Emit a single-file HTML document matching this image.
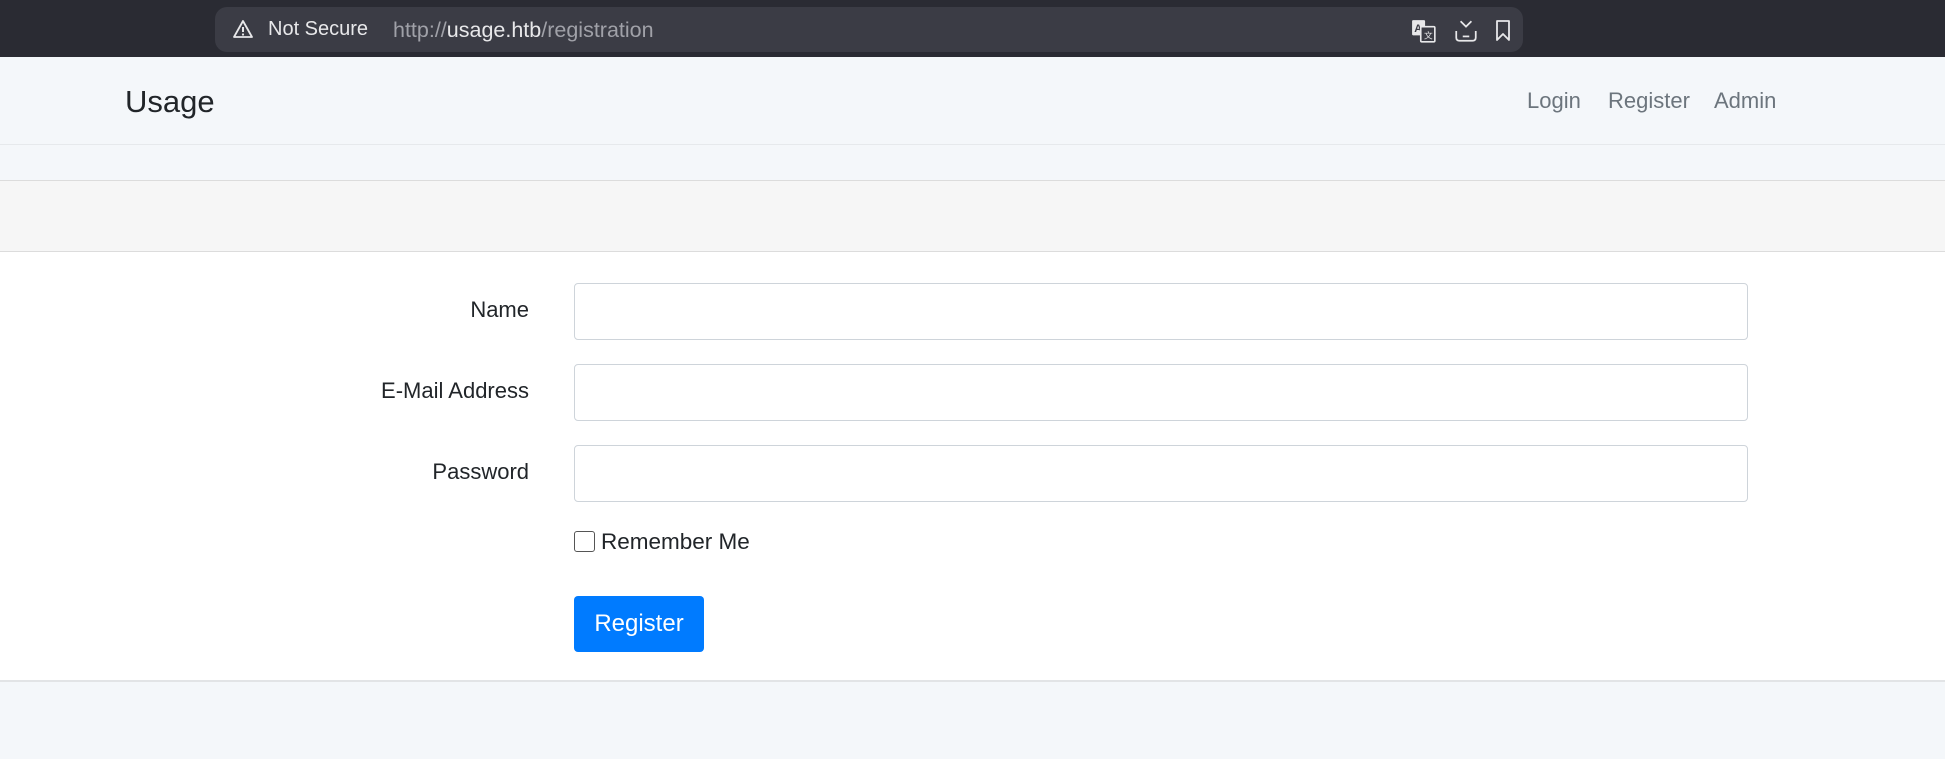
<!DOCTYPE html>
<html><head><meta charset="utf-8"><style>
*{box-sizing:border-box;margin:0;padding:0}
body{width:1945px;height:759px;overflow:hidden;background:#f4f7fa;font-family:"Liberation Sans",sans-serif;position:relative}
.top{position:absolute;left:0;top:0;width:1945px;height:57px;background:#2a2b33}
.url{position:absolute;left:215px;top:7px;width:1308px;height:45px;background:#3b3c45;border-radius:12px}
.url .t{position:absolute;top:11px;font-size:20px;color:#e8e8ea;white-space:nowrap}
.nav{position:absolute;left:0;top:57px;width:1945px;height:88px;background:#f4f7fa;border-bottom:1px solid #e6e9ec}
.brand{position:absolute;left:125px;top:27px;font-size:31px;color:#212529}
.links{position:absolute;top:31px;font-size:22px;color:#6c757d}
.band{position:absolute;left:0;top:180px;width:1945px;height:72px;background:#f6f6f6;border-top:1px solid #dcdcdc;border-bottom:1px solid #dcdcdc}
.main{position:absolute;left:0;top:252px;width:1945px;height:430px;background:#fff;border-bottom:2px solid #e2e4e6}
.lbl{position:absolute;right:1416px;font-size:22px;color:#212529}
.in{position:absolute;left:574px;width:1174px;height:57px;border:1px solid #ced4da;border-radius:4px;background:#fff}
.cb{position:absolute;left:574px;top:531px;width:21px;height:21px;border:1.5px solid #555;border-radius:3px}
.btn{position:absolute;left:574px;top:596px;width:130px;height:56px;background:#007bff;border-radius:4px;color:#fff;font-size:24px;text-align:center;line-height:56px}
</style></head><body>
<div class="top"><div class="url">
<svg style="position:absolute;left:17px;top:12px" width="22" height="20" viewBox="0 0 22 20"><path d="M11 2 L20 18 H2 Z" fill="none" stroke="#e8e8ea" stroke-width="1.8" stroke-linejoin="round"/><path d="M11 8v5" stroke="#e8e8ea" stroke-width="2"/><circle cx="11" cy="15.5" r="1.1" fill="#e8e8ea"/></svg>
<span class="t" style="left:53px">Not Secure</span>
<span class="t" style="left:178px;color:#a0a1a8;font-size:21.5px">http://<span style="color:#e8e8ea">usage.htb</span>/registration</span>
<svg style="position:absolute;left:1196px;top:11px" width="26" height="26" viewBox="0 0 24 24"><rect x="1" y="2" width="12" height="14" rx="1" fill="#e8e8ea"/><text x="3" y="13" font-size="10" font-family="Liberation Sans" font-weight="bold" fill="#3b3c45">A</text><rect x="9" y="8" width="13" height="14" rx="1" fill="#3b3c45" stroke="#e8e8ea" stroke-width="1.5"/><text x="12" y="19" font-size="8" fill="#e8e8ea" font-family="Liberation Sans">文</text></svg>
<svg style="position:absolute;left:1239px;top:11px" width="24" height="26" viewBox="0 0 22 24"><path d="M6 3 L11 8 L16 3" fill="none" stroke="#e8e8ea" stroke-width="1.6"/><path d="M2 12 V18 Q2 21 5 21 H17 Q20 21 20 18 V12" fill="none" stroke="#e8e8ea" stroke-width="1.6"/><path d="M8 17H14" stroke="#e8e8ea" stroke-width="1.6"/></svg>
<svg style="position:absolute;left:1279px;top:11px" width="18" height="26" viewBox="0 0 18 24"><path d="M3 2H15V21L9 15L3 21Z" fill="none" stroke="#e8e8ea" stroke-width="1.8" stroke-linejoin="round"/></svg>
</div></div>
<div class="nav"><div class="brand">Usage</div>
<span class="links" style="left:1527px">Login</span>
<span class="links" style="left:1608px">Register</span>
<span class="links" style="left:1714px">Admin</span>
</div>
<div class="band"></div>
<div class="main"></div>
<div class="lbl" style="top:297px">Name</div>
<div class="lbl" style="top:378px">E-Mail Address</div>
<div class="lbl" style="top:459px">Password</div>
<div class="in" style="top:283px"></div>
<div class="in" style="top:364px"></div>
<div class="in" style="top:445px"></div>
<div class="cb"></div>
<div style="position:absolute;left:601px;top:529px;font-size:22.5px;color:#212529">Remember Me</div>
<div class="btn">Register</div>
</body></html>
